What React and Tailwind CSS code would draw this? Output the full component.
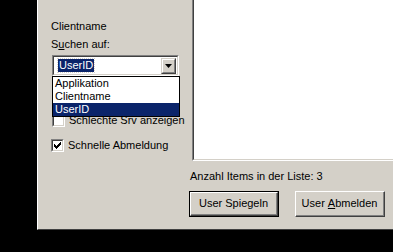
import React from "react";

const font = { fontFamily: '"Liberation Sans", Arial, sans-serif' };

const Checkbox = ({ checked }) => (
  <div className="w-[13px] h-[13px] border-t border-l border-[#808080] border-b border-r border-b-white border-r-white shrink-0">
    <div className="w-full h-full bg-white border-t border-l border-[#404040] border-b border-r border-b-[#d4d0c8] border-r-[#d4d0c8] flex items-center justify-center">
      {checked && (
        <svg width="7" height="7" viewBox="0 0 7 7">
          <path d="M0 2h1v1h1v1h1V3h1V2h1V1h1V0h1v3H6v1H5v1H4v1H3v1H2V6H1V5H0z" fill="#000" />
        </svg>
      )}
    </div>
  </div>
);

const Button = ({ children, isDefault }) => (
  <div
    className={
      "w-[90px] h-[26px] " +
      (isDefault ? "border border-black" : "")
    }
  >
    <div className="w-full h-full border-t border-l border-white border-b border-r border-b-[#404040] border-r-[#404040]">
      <div className="w-full h-full border-b border-r border-[#808080] flex items-center justify-center text-[11px] text-black">
        {children}
      </div>
    </div>
  </div>
);

const App = () => {
  return (
    <div className="w-[393px] h-[252px] bg-black overflow-hidden" style={font}>
      <div className="ml-[37px] h-[230px] bg-[#d4d0c8] border-l border-white border-b border-b-[#404040] flex text-[11px] leading-[13px] text-black">
        {/* left column */}
        <div className="w-[154px] relative pl-[13px] pt-[20px]">
          <div>Clientname</div>
          <div className="mt-[5px]">
            S<span className="underline">u</span>chen auf:
          </div>
          <div className="mt-[4px] ml-[1px] w-[127px] h-[21px] border-t border-l border-[#808080] border-b border-r border-b-white border-r-white">
            <div className="w-full h-full bg-white border-t border-l border-[#404040] border-b border-r border-b-[#d4d0c8] border-r-[#d4d0c8] flex items-center pl-[4px] pr-[1px]">
              <span className="bg-[#0a246a] text-white px-[1px] leading-[13px] outline-1 outline-dotted outline-[#d4d0c8]">
                UserID
              </span>
              <div className="ml-auto w-[15px] h-[16px] bg-[#d4d0c8] border-t border-l border-[#d4d0c8] border-b border-r border-b-[#404040] border-r-[#404040]">
                <div className="w-full h-full border-t border-l border-white border-b border-r border-b-[#808080] border-r-[#808080] flex items-center justify-center">
                  <svg width="7" height="4" viewBox="0 0 7 4">
                    <path d="M0 0h7L3.5 4z" fill="#000" />
                  </svg>
                </div>
              </div>
            </div>
          </div>

          <div className="mt-[38px] flex items-center gap-[4px] ml-[1px]">
            <Checkbox />
            <span>Schlechte Srv anzeigen</span>
          </div>
          <div className="mt-[12px] flex items-center gap-[4px]">
            <Checkbox checked />
            <span>Schnelle Abmeldung</span>
          </div>

          {/* dropdown list */}
          <div className="absolute left-[14px] top-[76px] w-[128px] h-[41px] bg-white border border-black flex flex-col">
            <div className="h-[13px] pl-[2px]">Applikation</div>
            <div className="h-[13px] pl-[2px]">Clientname</div>
            <div className="h-[13px] pl-[2px] bg-[#0a246a] text-white">UserID</div>
          </div>
        </div>

        {/* right column */}
        <div className="flex-1 flex flex-col">
          <div className="h-[161px] border-l border-[#808080] border-b border-b-white">
            <div className="h-full bg-white border-l border-[#404040] border-b border-b-[#d4d0c8]" />
          </div>
          <div className="mt-[9px] ml-[-2px]">Anzahl Items in der Liste: 3</div>
          <div className="mt-[8px] ml-[-3px] flex gap-[16px]">
            <Button isDefault>User Spiegeln</Button>
            <Button>
              User&nbsp;<span className="underline">A</span>bmelden
            </Button>
          </div>
        </div>
      </div>
    </div>
  );
};

export default App;
